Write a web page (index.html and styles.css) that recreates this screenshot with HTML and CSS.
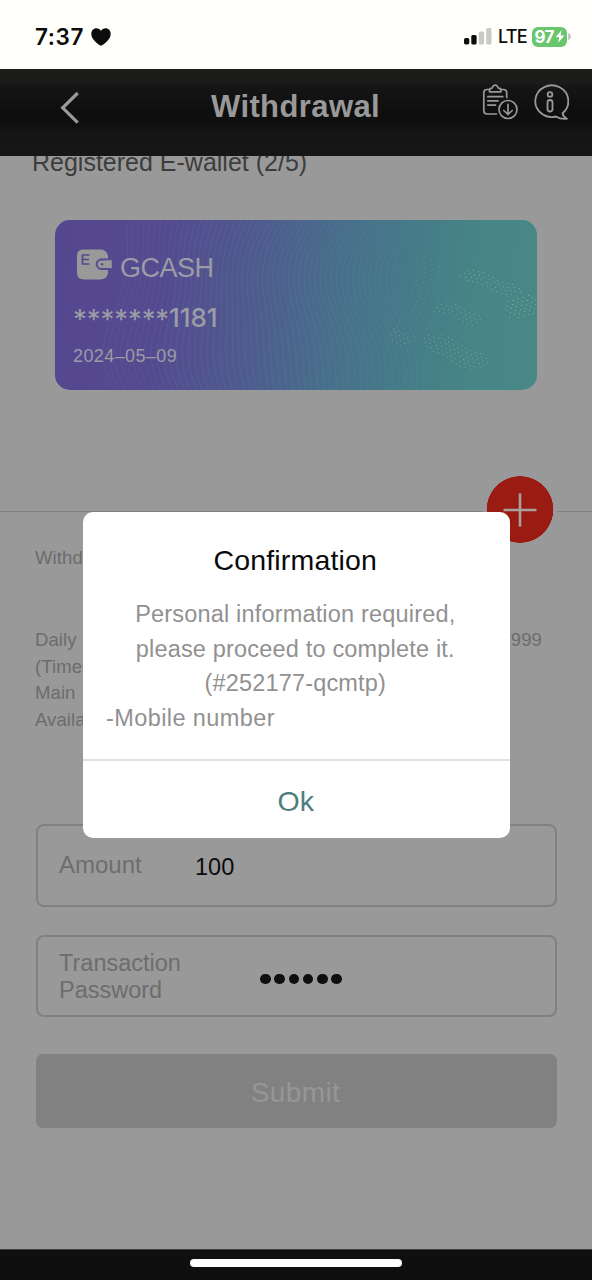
FILE: index.html
```html
<!DOCTYPE html>
<html lang="en">
<head>
<meta charset="utf-8">
<title>Withdrawal</title>
<link rel="stylesheet" href="styles.css">
</head>
<body>
<div class="screen">
  <div class="status-bar">
    <div class="status-left">
      <span class="time">7:37</span>
      <svg class="heart" width="20" height="18" viewBox="0 0 20 18"><path d="M10 17.8C8 16.7.3 11.7.3 5.9.3 2.700 2.500.3 5.300.3 7.400.3 9.100 1.400 10 3 10.900 1.400 12.600.3 14.700.3c2.800 0 5 2.400 5 5.600C19.700 11.700 12 16.700 10 17.800z" fill="#0c0c0c"/></svg>
    </div>
    <div class="status-right">
      <svg class="signal" width="28" height="17" viewBox="0 0 28 17"><rect x="0" y="10" width="5.300" height="6.500" rx="1.700" fill="#0c0c0c"/><rect x="7.300" y="7" width="5.300" height="9.500" rx="1.600" fill="#0c0c0c"/><rect x="14.800" y="3.500" width="5.300" height="13" rx="1.500" fill="#c9c9c7"/><rect x="22.200" y="0" width="5.300" height="16.500" rx="1.500" fill="#c9c9c7"/></svg>
      <span class="network">LTE</span>
      <div class="battery"><span>97</span><svg width="10" height="13" viewBox="0 0 10 13"><path d="M6.500.3.600 7.300h3.600L3.300 12.700 9.400 5.500H5.600z" fill="#fff"/></svg></div>
      <svg class="battery-tip" width="3" height="7" viewBox="0 0 3 7"><path d="M.3 0Q2.700 1 2.700 3.500T.3 7z" fill="#b9b9b7"/></svg>
    </div>
  </div>

  <header class="header">
    <svg class="back" width="20" height="34" viewBox="0 0 20 34"><path d="M17.700 2 2.700 16.800 17.700 31.600" fill="none" stroke="#999" stroke-width="3.200"/></svg>
    <h1 class="title">Withdrawal</h1>
    <div class="header-icons">
      <svg width="37" height="37" viewBox="0 0 37 37" fill="none" stroke="#999" stroke-width="1.700" stroke-linecap="round" stroke-linejoin="round">
        <path d="M7.500 5.500H5Q1.800 5.500 1.800 8.700V26.800Q1.800 30 5 30H14.500M18.500 5.500H21.500Q24.700 5.500 24.700 8.700V13.500"/>
        <path d="M7.500 7.800V6.200Q7.500 4.200 9.800 4.100C10.800 3.900 10.500 1.200 13.200 1.200S15.600 3.900 16.600 4.100Q18.900 4.200 18.900 6.200V7.800z"/>
        <path d="M5.800 12.700H20.800M5.800 16.900H16M5.800 21.100H13.500"/>
        <circle cx="26" cy="25.500" r="9"/><path d="M26 20.300V30.200M21.800 26.500 26 30.500 30.200 26.500"/>
      </svg>
      <svg width="37" height="37" viewBox="0 0 37 37" fill="none" stroke="#999" stroke-width="1.800" stroke-linecap="round" stroke-linejoin="round">
        <path d="M30.500 29.200A16.500 15.800 0 1 0 23.800 32.500C27.500 34.600 31.500 35.300 35 34.700 32.500 33.500 31 31.700 30.500 29.200z"/>
        <circle cx="18" cy="10.500" r="2.300"/><rect x="15.500" y="16" width="5" height="11.500" rx="2.500"/>
      </svg>
    </div>
  </header>

  <main class="content">
    <h2 class="section-title">Registered E-wallet (2/5)</h2>

    <section class="wallet">
      <svg class="wallet-pattern" id="pattern" width="482" height="170" viewBox="0 0 482 170"></svg>
      <div class="wallet-body">
        <div class="wallet-brand">
          <svg width="36" height="31" viewBox="0 0 36 31">
            <path d="M7 .5H25Q30.500.5 32 7V24Q31 30.500 24 30.500H8Q1 30.500 1 23.500V7Q1 .5 7 .5z" fill="#999"/>
            <path d="M35.500 10.500H25.500A4.700 4.700 0 0 0 25.500 20H35.500" fill="#999" stroke="#55498f" stroke-width="2"/>
            <path d="M30 11.500H35.500V19H30z" fill="#999"/>
            <circle cx="26" cy="15.200" r="1.200" fill="#55498f"/>
            <path d="M13.500 6H6.500V15H13.500M6.500 10.500H13" fill="none" stroke="#55498f" stroke-width="1.700"/>
          </svg>
          <span>GCASH</span>
        </div>
        <div class="wallet-number"><span class="mask">*******</span><span class="digits">1181</span></div>
        <div class="wallet-date">2024–05–09</div>
      </div>
    </section>

    <div class="divider">
      <button class="add"><svg width="34" height="34" viewBox="0 0 34 34"><path d="M17 .5V33.500M.5 17H33.500" stroke="#aaa09e" stroke-width="2.600"/></svg></button>
    </div>

    <div class="details">
      <p class="detail-heading">Withdrawal</p>
      <p class="detail"><span>Daily</span><span>999</span></p>
      <p class="detail">(Times)</p>
      <p class="detail">Main</p>
      <p class="detail">Available</p>
    </div>

    <form class="form">
      <div class="field"><span class="label">Amount</span><span class="amount">100</span></div>
      <div class="field"><span class="label label-password">Transaction Password</span>
        <span class="dots"><i></i><i></i><i></i><i></i><i></i><i></i></span></div>
      <button class="submit" type="button">Submit</button>
    </form>
  </main>

  <footer class="home-bar"><div class="home-indicator"></div></footer>

  <div class="modal" role="dialog">
    <h3 class="modal-title">Confirmation</h3>
    <div class="modal-text">
      <p>Personal information required,<br>please proceed to complete it.<br>(#252177-qcmtp)</p>
      <p class="modal-item">-Mobile number</p>
    </div>
    <button class="modal-ok">Ok</button>
  </div>
</div>
<script src="script.js"></script>
</body>
</html>
```
FILE: styles.css
```css
* { box-sizing: border-box; margin: 0; padding: 0; }
body { background: #999; font-family: "Liberation Sans", Arial, sans-serif; }
button { border: 0; font-family: inherit; background: none; }
svg { display: block; flex: none; }
h1, h2, h3 { font-weight: 400; }

.screen { position: relative; width: 592px; height: 1280px; overflow: hidden; display: flex; flex-direction: column; background: #999; }

.status-bar { height: 69px; flex: none; padding: 0 22px 0 35px; background: #fffffc; color: #0c0c0c; display: flex; justify-content: space-between; font-family: Inter, sans-serif; }
.status-left, .status-right { display: flex; align-items: center; height: 73px; }
.time { font-size: 22.5px; font-weight: 600; letter-spacing: .6px; }
.heart { margin-left: 7px; }
.signal { margin-right: 6px; }
.network { font-size: 18px; font-weight: 500; letter-spacing: -.8px; width: 34px; }
.battery { width: 35px; height: 20px; border-radius: 6px; background: #69c66c; color: #fff; display: flex; align-items: center; justify-content: center; gap: 1px; font-size: 17px; font-weight: 700; letter-spacing: -.7px; line-height: 20px; }
.status-right { margin-right: -1px; }
.battery-tip { margin-left: 1px; }

.header { height: 87px; flex: none; padding: 0 23px 0 60px; background: linear-gradient(#1c1c1b 0, #1b1b1a 14px, #151515 18px, #0e0e0e 44px, #0f0f0f 56px, #151515 62px, #161616 100%); display: flex; align-items: flex-start; }
.back { margin-top: 22px; }
.title { flex: 1; margin: 19px 0 0 131px; color: #999; font-weight: 700; font-size: 31px; line-height: 38px; letter-spacing: .4px; }
.header-icons { display: flex; gap: 13px; margin-top: 15px; }

.content { flex: 1; overflow: hidden; }
.section-title { margin: -9px 0 0 32px; height: 30px; line-height: 30px; font-size: 25px; color: #3d3d3d; }

.wallet { position: relative; width: 482px; height: 170px; margin: 43px 0 0 55px; border-radius: 15px; overflow: hidden; background: linear-gradient(97deg, #55478f 0, #55498f 22%, #4f5a8e 41%, #486f8b 58%, #457b88 72%, #478686 87%, #478887 100%); color: #9b9ca5; }
.wallet-pattern { position: absolute; inset: 0; }
.wallet-body { position: relative; padding: 29px 0 0 18px; }
.wallet-brand { display: flex; gap: 8px; padding-left: 3px; font-size: 27px; letter-spacing: -.5px; line-height: 38px; height: 50px; }
.wallet-number { display: flex; height: 38px; line-height: 38px; font-family: Inter, sans-serif; font-size: 26px; }
.mask { width: 96px; font-size: 27.500px; letter-spacing: -.05px; padding-top: 1px; }
.digits { font-weight: 500; letter-spacing: -.1px; }
.wallet-date { margin-top: 8px; font-size: 18px; line-height: 22px; letter-spacing: .4px; }

.divider { height: 67px; margin-top: 86px; padding-left: 483px; background: linear-gradient(#808080, #808080) 0 35px / 100% 1px no-repeat; }
.add { display: grid; place-items: center; width: 74px; height: 67px; background: radial-gradient(circle at 50% 50%, #991b12 0, #991b12 33px, #999 33.5px); }

.details { height: 281px; padding: 2px 50px 0 35px; font-size: 18.5px; line-height: 26.8px; letter-spacing: .1px; color: #6c6c6c; }
.detail-heading { margin-bottom: 55px; }
.detail { display: flex; justify-content: space-between; }

.form { width: 521px; margin-left: 36px; }
.field { height: 82.500px; margin-bottom: 28px; padding: 0 21px; border: 2px solid #808080; border-radius: 8px; display: flex; align-items: center; }
.label { width: 136px; font-size: 24px; line-height: 27px; color: #6d6d6d; }
.label-password { font-size: 23.500px; padding-top: 2px; }
.amount { font-size: 23.500px; color: #0b0b0b; padding-top: 4px; }
.field .label:not(.label-password) { padding-bottom: 1px; }
.dots { display: flex; gap: 3.800px; margin: 6px 0 0 65px; }
.dots i { width: 10.500px; height: 10.500px; border-radius: 50%; background: #0f0f0f; }
.submit { display: block; width: 521px; height: 74px; margin-top: 37px; padding: 4px 2px 0 0; border-radius: 7px; background: #818181; color: #969696; font-size: 28px; letter-spacing: .4px; }

.home-bar { height: 31px; flex: none; padding-top: 9px; background: #0f0f0f; border-top: 1px solid #3c3c3c; }
.home-indicator { width: 212px; height: 8px; margin: 0 auto; border-radius: 4px; background: #fff; }

.modal { position: absolute; left: 83px; top: 512px; width: 426.500px; height: 326px; border-radius: 10px; background: #fff; text-align: center; display: flex; flex-direction: column; }
.modal-title { margin-top: 30px; padding-right: 2px; line-height: 36px; font-size: 28.500px; letter-spacing: .15px; color: #0a0a0a; }
.modal-text { flex: 1; margin-top: 19px; padding: 0 25px 0 23px; font-size: 23.500px; line-height: 34.700px; letter-spacing: .18px; color: #919191; }
.modal-text p { white-space: nowrap; }
.modal-text .modal-item { text-align: left; letter-spacing: .4px; }
.modal-ok { height: 79px; padding: 4px 1px 0 0; border-top: 2px solid #e0e0e0; font-size: 28.500px; color: #4d7d7e; }
```
FILE: script.js
```js
// Draws the guilloche waves and the dotted ridges of the wallet card.
const svg = document.getElementById('pattern');
const NS = 'http://www.w3.org/2000/svg';

function line(d, stroke, opacity, dash) {
  const p = document.createElementNS(NS, 'path');
  p.setAttribute('d', d);
  p.setAttribute('fill', 'none');
  p.setAttribute('stroke', stroke);
  p.setAttribute('stroke-width', '0.8');
  p.setAttribute('opacity', opacity);
  if (dash) p.setAttribute('stroke-dasharray', dash);
  svg.appendChild(p);
}

for (let i = 0; i < 52; i++) {
  const x = 65 + i * 5.7;
  let d = '';
  for (let y = 0; y <= 170; y += 5) {
    const px = x + 13 * Math.cos(y / 38 + i * 0.03) - 6 * Math.cos(y / 23 - i * 0.05);
    d += (y ? 'L' : 'M') + px.toFixed(1) + ' ' + y;
  }
  line(d, '#5795a5', i < 10 ? 0.2 : 0.26);
}

for (let i = 0; i < 5; i++) {
  const x = i * 7;
  line(`M${337 + x} ${116 + i * 2}C${352 + x} 86 ${369 + x} 60 ${361 + x} ${33 + i * 2}`, '#7ca49b', 0.6, '1 4');
}

// Staggered rows of dots filling a tilted ellipse.
function dots(cx, cy, rx, ry, angle, color) {
  const a = angle * Math.PI / 180;
  let row = 0;
  for (let v = -ry; v <= ry; v += 3.6, row++) {
    for (let u = -rx + (row % 2) * 2.6; u <= rx; u += 5.2) {
      if ((u * u) / (rx * rx) + (v * v) / (ry * ry) > 1) continue;
      const bend = 1.5 * Math.sin(u / 7);
      const r = document.createElementNS(NS, 'rect');
      r.setAttribute('x', Math.round(cx + u * Math.cos(a) - (v + bend) * Math.sin(a)));
      r.setAttribute('y', Math.round(cy + u * Math.sin(a) + (v + bend) * Math.cos(a)));
      r.setAttribute('width', 1);
      r.setAttribute('height', 1);
      r.setAttribute('fill', color);
      svg.appendChild(r);
    }
  }
}
dots(345, 117, 12, 8, 25, '#7d938c');
dots(400, 131, 36, 12, 24, '#7f9c89');
dots(404, 93, 25, 9, 20, '#789c89');
dots(435, 62, 33, 9, 18, '#70ad8c');
dots(466, 86, 18, 12, -25, '#76b77f');
```
